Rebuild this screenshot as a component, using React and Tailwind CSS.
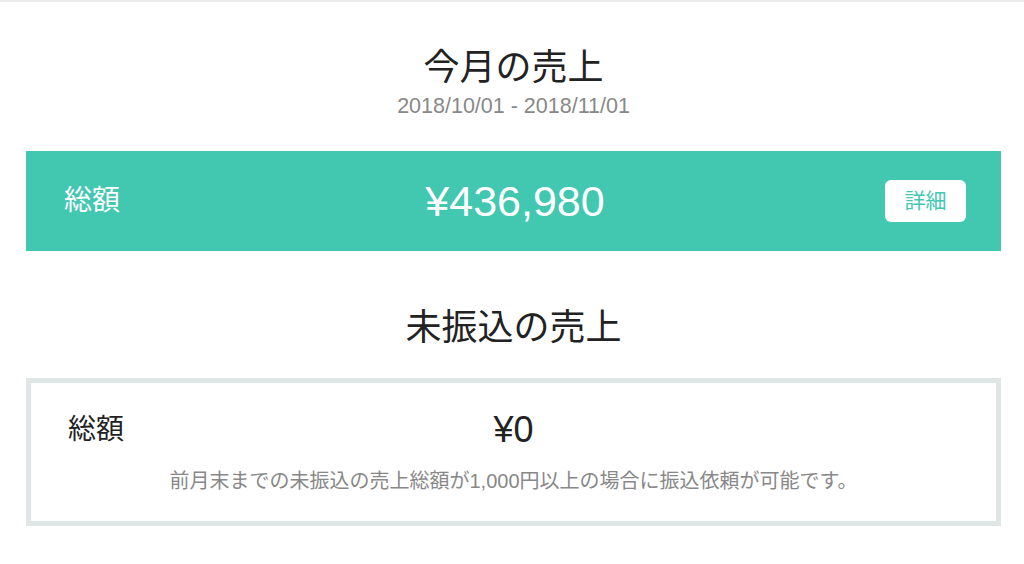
import React from 'react';

const font = { fontFamily: '"Liberation Sans", "Noto Sans CJK JP", sans-serif' };

const Heading = ({ children }) => (
    <h2 className="text-center text-[36px] leading-[40px] text-[#222]">{children}</h2>
);

export default function App() {
    const total = '¥436,980';
    const unpaid = '¥0';

    return (
        <div className="min-h-[564px] bg-white border-t-2 border-[#ebebeb]" style={font}>
            <div className="pl-[26px] pr-[23px]">
                {/* 今月の売上 */}
                <div className="pt-[46px]">
                    <Heading>今月の売上</Heading>
                    <p className="mt-[6px] text-center text-[21.5px] leading-[24px] text-[#888]">2018/10/01 - 2018/11/01</p>
                </div>

                <div className="mt-[33px] h-[100px] bg-[#42c7b1] grid grid-cols-[1fr_auto_1fr] items-center pl-[38px] pr-[35px]">
                    <div className="text-[28px] leading-[36px] text-white">総額</div>
                    <div className="text-center text-[43px] leading-[48px] text-white">{total}</div>
                    <div className="flex justify-end">
                        <button className="w-[81px] h-[42px] rounded-[6px] bg-white text-[21px] leading-[24px] text-[#42c7b1]">詳細</button>
                    </div>
                </div>

                {/* 未振込の売上 */}
                <div className="mt-[57px]">
                    <Heading>未振込の売上</Heading>
                </div>

                <div className="mt-[30px] border-[5px] border-[#e0e5e5] h-[148px] px-[37px] pt-[27px]">
                    <div className="grid grid-cols-[1fr_auto_1fr] items-center h-[40px]">
                        <div className="text-[28px] leading-[36px] text-[#222]">総額</div>
                        <div className="text-center text-[36px] leading-[40px] text-[#222]">{unpaid}</div>
                        <div />
                    </div>
                    <p className="mt-[19px] text-center text-[20px] leading-[24px] text-[#888]">
                        前月末までの未振込の売上総額が1,000円以上の場合に振込依頼が可能です。
                    </p>
                </div>
            </div>
        </div>
    );
}
